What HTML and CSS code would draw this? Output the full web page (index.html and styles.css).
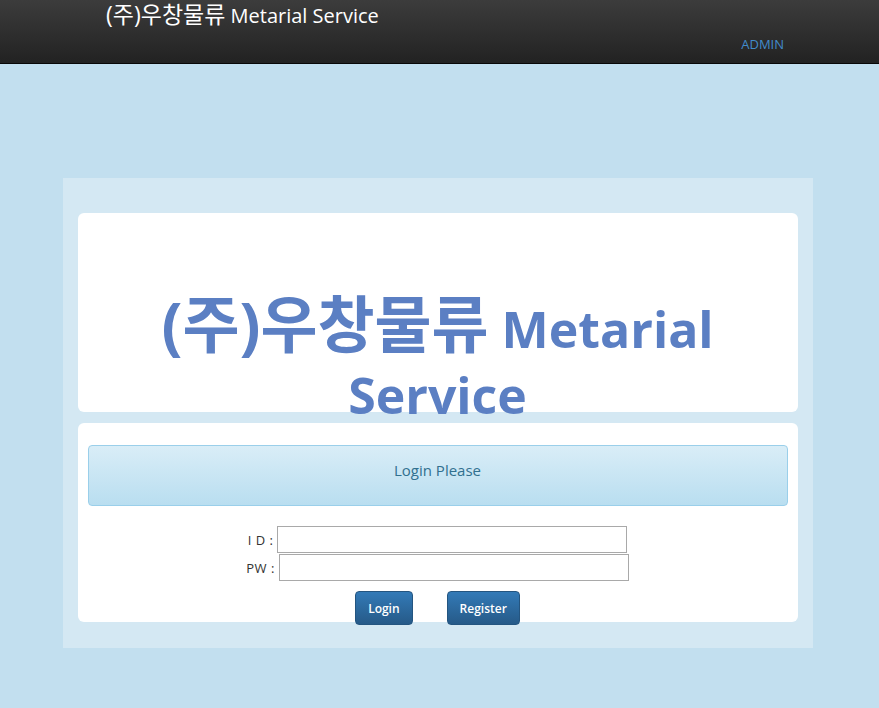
FILE: index.html
```html
<!DOCTYPE html>
<html lang="ko">
<head>
<meta charset="utf-8">
<title>(주)우창물류 Metarial Service</title>
<link rel="stylesheet" href="styles.css">
</head>
<body>
<header class="topbar">
  <div class="brand"><span class="ko">(주)우창물류</span> Metarial Service</div>
  <nav class="topnav"><a href="#" class="admin">ADMIN</a></nav>
</header>
<main class="stage">
  <section class="panel">
    <div class="card hero">
      <h1 class="hero-title"><span class="ko">(주)우창물류</span> <span class="en">Metarial</span> <span class="en">Service</span></h1>
    </div>
    <div class="card login">
      <div class="alert">Login Please</div>
      <form class="form">
        <div class="row"><label class="lbl">I D :</label><input class="field" type="text"></div>
        <div class="row row-pw"><label class="lbl">PW :</label><input class="field" type="password"></div>
        <div class="actions">
          <button type="button" class="btn">Login</button>
          <button type="button" class="btn">Register</button>
        </div>
      </form>
    </div>
  </section>
</main>
</body>
</html>
```
FILE: styles.css
```css
* { box-sizing: border-box; }
html, body { margin: 0; padding: 0; }
body {
  background: #c2dfef;
  font-family: "Open Sans", "Noto Sans CJK KR", sans-serif;
  color: #333;
  height: 708px;
  overflow: hidden;
}
.topbar {
  height: 64px;
  background: linear-gradient(#3c3c3c, #222);
  border-bottom: 1px solid #080808;
}
.brand {
  padding-left: 106px;
  padding-top: 2px;
  color: #fff;
  font-size: 20px;
  line-height: 25px;
}
.brand .ko {
  font-size: 23px;
}
.topnav {
  display: flex;
  justify-content: flex-end;
  padding-right: 95px;
  margin-top: 7px;
}
.admin {
  color: #428bca;
  font-size: 13px;
  line-height: 18px;
  text-decoration: none;
}
.stage {
  padding-top: 114px;
  display: flex;
  justify-content: center;
}
.panel {
  width: 750px;
  margin-left: -4px;
  background: #d4e8f3;
  padding: 35px 15px 26px;
  display: flex;
  flex-direction: column;
  gap: 11px;
}
.card {
  background: #fff;
  border-radius: 6px;
  height: 199px;
}
.hero { padding-top: 78px; }
.hero-title {
  margin: 0;
  text-align: center;
  color: #5b7fc3;
  font-size: 50px;
  line-height: 66px;
  font-weight: 700;
}
.hero-title .ko {
  display: inline-block;
  font-size: 62px;
  line-height: 66px;
  height: 66px;
}
.login { padding: 22px 10px 0; }
.alert {
  height: 61px;
  border: 1px solid #9acfea;
  border-radius: 4px;
  background: linear-gradient(#d9edf7, #b9def0);
  color: #31708f;
  font-size: 15px;
  line-height: 20px;
  padding-top: 14px;
  text-align: center;
}
.form { margin-top: 20px; }
.row {
  display: flex;
  justify-content: center;
  align-items: center;
  height: 27px;
  margin-bottom: 1px;
  gap: 4px;
}
.lbl {
  font-size: 13px;
  color: #333;
  letter-spacing: 0.5px;
}
.field {
  width: 350px;
  height: 27px;
  border: 1px solid #a9a9a9;
  background: #fff;
  margin: 0;
  padding: 2px 4px;
}
.actions {
  display: flex;
  justify-content: center;
  gap: 34px;
  margin-top: 10px;
}
.btn {
  height: 34px;
  padding: 0 12px;
  font-family: "Open Sans", sans-serif;
  font-size: 12px;
  font-weight: 600;
  color: #fff;
  background: linear-gradient(#337ab7, #265a88);
  border: 1px solid #245580;
  border-radius: 4px;
}
```
